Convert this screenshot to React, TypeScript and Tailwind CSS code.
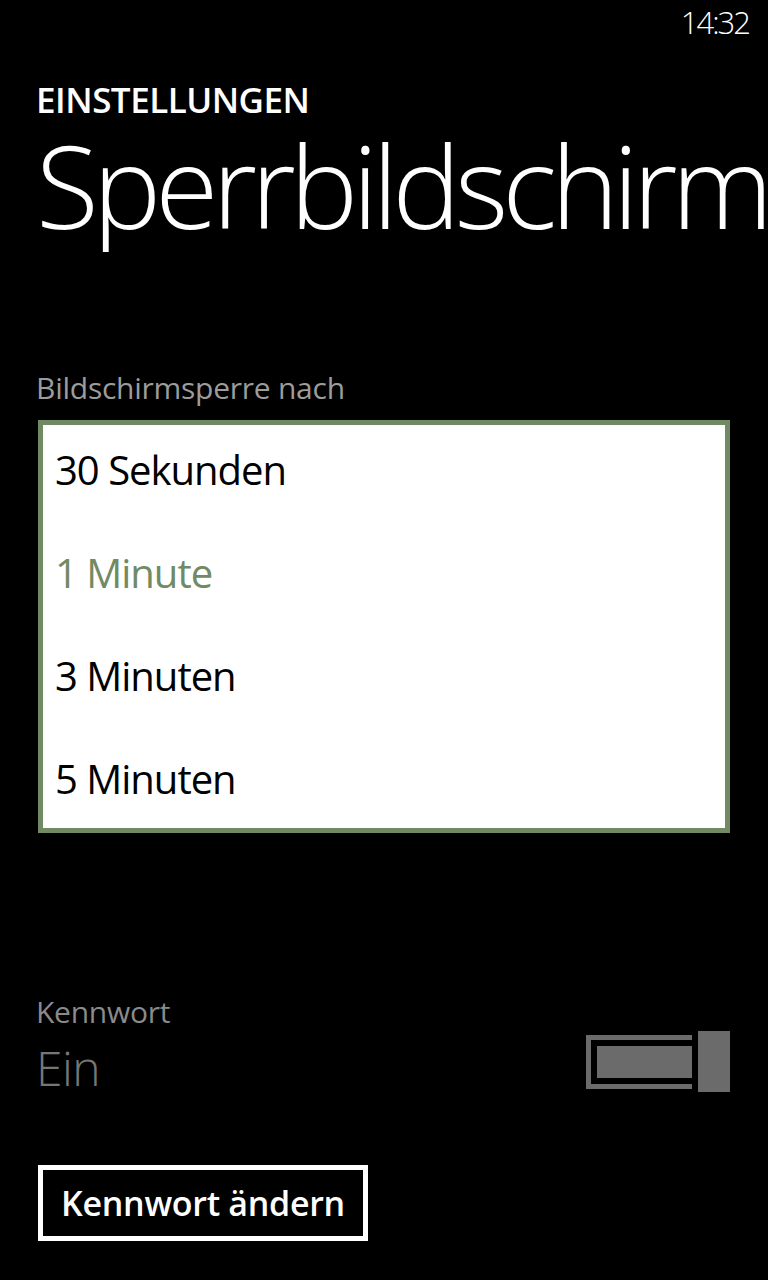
const items = ["30 Sekunden", "1 Minute", "3 Minuten", "5 Minuten"];

export default function App() {
  return (
    <div
      className="flex h-[1280px] w-[768px] flex-col overflow-hidden bg-black text-white"
      style={{ fontFamily: '"Open Sans", "Noto Sans", sans-serif' }}
    >
      {/* status bar */}
      <div className="flex h-[48px] justify-end pr-[19px] pt-[7px]">
        <span className="text-[31px] font-light leading-none tracking-[-2px]">14:32</span>
      </div>

      <div className="flex flex-col px-[36px]">
        <div className="mt-[34px] text-[35px] font-semibold leading-none tracking-[-0.5px]">EINSTELLUNGEN</div>
        <div className="-mr-[36px] overflow-hidden whitespace-nowrap text-[115px] font-light leading-[135px] tracking-[-6px]">
          Sperrbildschirm
        </div>

        <div className="mt-[121px] text-[30px] leading-none tracking-[-0.25px] text-[#9c9c9c]">
          Bildschirmsperre nach
        </div>

        {/* list picker */}
        <div className="ml-[2px] mr-[2px] mt-[17px] flex h-[413px] flex-col gap-[63px] border-[5px] border-[#718a64] bg-white pl-[12px] pt-[25px]">
          {items.map((item) => (
            <div
              key={item}
              className={`text-[40px] leading-none tracking-[-1px] ${item === "1 Minute" ? "text-[#718a64]" : "text-black"}`}
            >
              {item}
            </div>
          ))}
        </div>

        <div className="mt-[164px] text-[30px] leading-none tracking-[-0.25px] text-[#8a8a8a]">Kennwort</div>
        <div className="mr-[2px] mt-[4px] flex items-start justify-between">
          <div className="mt-[13px] text-[48px] font-light leading-none tracking-[-0.5px] text-[#767676]">Ein</div>
          <div className="flex items-center">
            <div className="flex h-[54px] w-[106px] border-[5px] border-r-0 border-[#6b6b6b] py-[6px] pl-[6px]">
              <div className="flex-1 bg-[#6b6b6b]" />
            </div>
            <div className="ml-[6px] h-[61px] w-[32px] bg-[#6b6b6b]" />
          </div>
        </div>

        <button className="ml-[2px] mt-[73px] flex h-[76px] w-[330px] items-center justify-center border-[5px] border-white text-[34px] font-semibold leading-none tracking-[-0.3px]">
          Kennwort ändern
        </button>
      </div>
    </div>
  );
}
